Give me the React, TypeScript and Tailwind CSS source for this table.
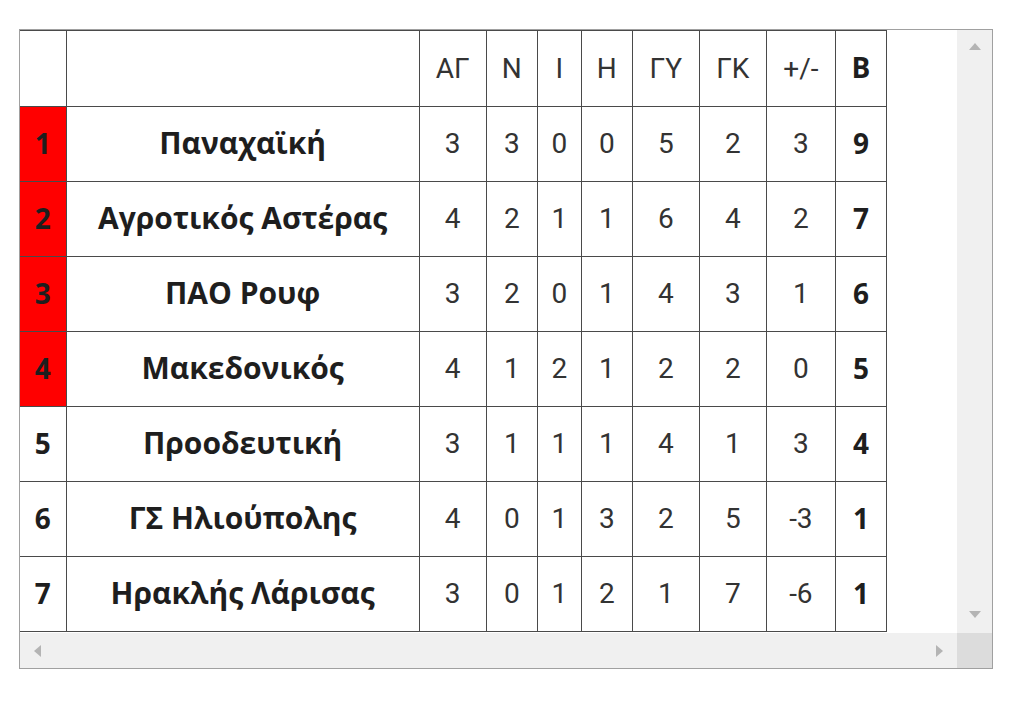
import React from "react";

const rows = [
  { pos: 1, name: "Παναχαϊκή", d: ["3", "3", "0", "0", "5", "2", "3"], pts: "9", red: true },
  { pos: 2, name: "Αγροτικός Αστέρας", d: ["4", "2", "1", "1", "6", "4", "2"], pts: "7", red: true },
  { pos: 3, name: "ΠΑΟ Ρουφ", d: ["3", "2", "0", "1", "4", "3", "1"], pts: "6", red: true },
  { pos: 4, name: "Μακεδονικός", d: ["4", "1", "2", "1", "2", "2", "0"], pts: "5", red: true },
  { pos: 5, name: "Προοδευτική", d: ["3", "1", "1", "1", "4", "1", "3"], pts: "4", red: false },
  { pos: 6, name: "ΓΣ Ηλιούπολης", d: ["4", "0", "1", "3", "2", "5", "-3"], pts: "1", red: false },
  { pos: 7, name: "Ηρακλής Λάρισας", d: ["3", "0", "1", "2", "1", "7", "-6"], pts: "1", red: false },
];

const heads = ["ΑΓ", "Ν", "Ι", "Η", "ΓΥ", "ΓΚ", "+/-"];
const widths = [46, 353, 67, 51, 44, 51, 67, 67, 69, 51];
const bold = { fontFamily: "'Open Sans', Roboto, sans-serif" };

export default function App() {
  return (
    <div className="w-[1024px] h-[703px] bg-white pt-[29px] pl-[19px]" style={{ fontFamily: "Roboto, 'Liberation Sans', sans-serif" }}>
      <div className="w-[974px] h-[640px] border border-[#a0a0a0] flex flex-col">
        <div className="flex h-[603px]">
          <div className="flex-1 overflow-hidden">
            <table className="table-fixed border-collapse w-[867px]">
              <colgroup>
                {widths.map((w, i) => (
                  <col key={i} style={{ width: w }} />
                ))}
              </colgroup>
              <thead>
                <tr className="h-[76px]">
                  <th className="border border-[#4a4a4a] border-l-0"></th>
                  <th className="border border-[#4a4a4a]"></th>
                  {heads.map((h) => (
                    <th key={h} className="border border-[#4a4a4a] text-center font-normal text-[28px] text-[#333]">
                      {h}
                    </th>
                  ))}
                  <th className="border border-[#4a4a4a] text-center font-bold text-[28px] text-[#1e1e1e] pb-[4px]" style={bold}>Β</th>
                </tr>
              </thead>
              <tbody>
                {rows.map((r) => (
                  <tr key={r.pos} className="h-[75px]">
                    <td
                      className={`border border-[#4a4a4a] border-l-0 text-center font-bold text-[28px] text-[#1e1e1e] pb-[3px] ${r.red ? "bg-[#ff0000]" : ""}`}
                      style={bold}
                    >
                      {r.pos}
                    </td>
                    <td className="border border-[#4a4a4a] text-center font-bold text-[30px] text-[#1e1e1e] pb-[3px]" style={bold}>
                      {r.name}
                    </td>
                    {r.d.map((v, i) => (
                      <td key={i} className="border border-[#4a4a4a] text-center font-normal text-[28px] text-[#333]">
                        {v}
                      </td>
                    ))}
                    <td className="border border-[#4a4a4a] text-center font-bold text-[28px] text-[#1e1e1e] pb-[3px]" style={bold}>
                      {r.pts}
                    </td>
                  </tr>
                ))}
              </tbody>
            </table>
          </div>
          <div className="w-[35px] bg-[#f0f0f0] flex flex-col items-center justify-between pt-[13px] pb-[15px]">
            <svg width="12" height="7" viewBox="0 0 12 7"><path d="M6 0 L12 7 L0 7 Z" fill="#b4b4b4" /></svg>
            <svg width="12" height="7" viewBox="0 0 12 7"><path d="M0 0 L12 0 L6 7 Z" fill="#b4b4b4" /></svg>
          </div>
        </div>
        <div className="flex flex-1">
          <div className="flex-1 bg-[#f0f0f0] flex items-center justify-between pl-[14px] pr-[14px]">
            <svg width="7" height="12" viewBox="0 0 7 12"><path d="M0 6 L7 0 L7 12 Z" fill="#b4b4b4" /></svg>
            <svg width="7" height="12" viewBox="0 0 7 12"><path d="M7 6 L0 0 L0 12 Z" fill="#b4b4b4" /></svg>
          </div>
          <div className="w-[35px] bg-[#dcdcdc]"></div>
        </div>
      </div>
    </div>
  );
}
